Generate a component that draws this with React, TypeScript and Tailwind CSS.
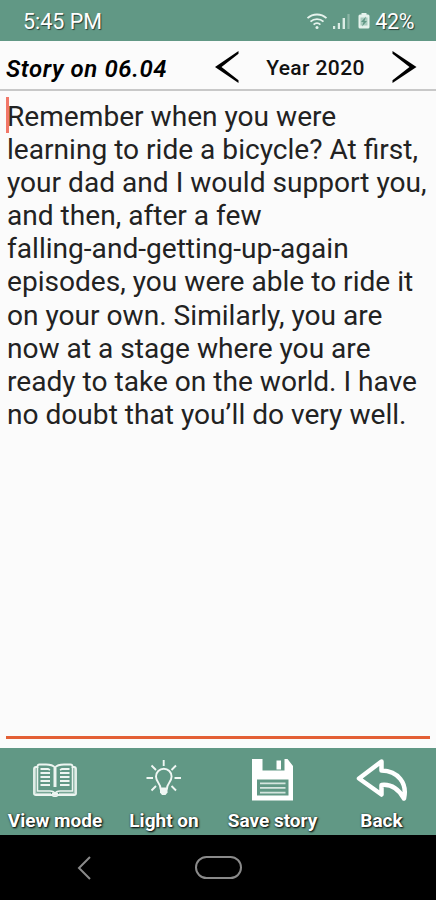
import type { ReactNode } from 'react'

const STORY_LINES = [
  'Remember when you were',
  'learning to ride a bicycle? At first,',
  'your dad and I would support you,',
  'and then, after a few',
  'falling-and-getting-up-again',
  'episodes, you were able to ride it',
  'on your own. Similarly, you are',
  'now at a stage where you are',
  'ready to take on the world. I have',
  'no doubt that you’ll do very well.',
]

/** Status bar: time on the left, wifi, signal and battery on the right. */
function StatusBar() {
  return (
    <div className="flex h-[41px] items-center justify-between bg-[#619885] pt-[3px] pr-[22px] pl-[23px] text-[21.5px] leading-none text-white [text-shadow:1px_1px_1px_rgba(0,0,0,0.6)]">
      <span className="whitespace-nowrap">5:45 PM</span>
      <div className="flex items-center">
        <svg className="mr-[5px] mb-[3px]" width="22" height="18" viewBox="0 0 22 18" fill="none" stroke="#e6f3ed" strokeWidth="1.8">
          <path d="M1.5 6.2a14 14 0 0 1 19 0M4.5 9.6a9.5 9.5 0 0 1 13 0M7.6 12.6a5 5 0 0 1 6.8 0" />
          <circle cx="11" cy="15.5" r="1.5" fill="#e6f3ed" stroke="none" />
        </svg>
        <svg className="mr-[8px] mb-[2px]" width="17" height="18" viewBox="0 0 17 18" fill="#dcece5">
          <path d="M0 14h2.2v3H0zM4.8 11h2.2v6H4.8zM9.6 6h2.4v11H9.6z" />
          <path d="M14.4 2h2.2v15h-2.2z" opacity=".35" />
        </svg>
        <svg className="mr-[5px] mb-[2px]" width="12" height="18" viewBox="0 0 12 18">
          <path d="M3.5 1h5v1.500H10a1.5 1.5 0 0 1 1.5 1.5v11A1.5 1.5 0 0 1 10 16.500H2A1.5 1.5 0 0 1 .5 15V4A1.5 1.5 0 0 1 2 2.500h1.500z" fill="#e6f3ed" />
          <path d="M2.5 5.500h7v8h-7z" fill="#a9ccbf" />
          <path d="M8 4.500 3 10h2.500L4 14.500 9 9H6.500z" fill="#619885" />
        </svg>
        <span className="tracking-[-0.4px]">42%</span>
      </div>
    </div>
  )
}

function Header() {
  return (
    <header className="flex h-[50px] items-center border-b-2 border-[#c8c8c8] pl-[6px] text-black">
      <h1 className="w-[208px] pt-[7px] text-[24px] leading-none font-semibold tracking-[0.6px] whitespace-nowrap italic">
        Story on 06.04
      </h1>
      <button type="button" aria-label="Previous year" className="mt-[4px]">
        <svg width="26" height="34" viewBox="0 0 26 34">
          <path d="M24.5 1v2.800L7.5 17l17 13.200V33L1 17z" fill="#000" />
        </svg>
      </button>
      <span className="w-[151px] pt-[7px] text-center text-[21px] leading-none font-medium tracking-[0.4px] whitespace-nowrap text-[#111]">
        Year 2020
      </span>
      <button type="button" aria-label="Next year" className="mt-[4px]">
        <svg width="26" height="34" viewBox="0 0 26 34">
          <path d="M1.5 1v2.800L18.5 17l-17 13.200V33L25.5 17z" fill="#000" />
        </svg>
      </button>
    </header>
  )
}

function BookIcon() {
  return (
    <svg width="44" height="34" viewBox="0 0 44 34" fill="none" stroke="#edf5f1">
      <path d="M22 4.500C20 2 17 1.500 13 1.500H6.500Q4.500 1.500 4.500 3.500V4H3Q1 4 1 6v24.500Q1 32 3 32h16q.5 1.200 3 1.200t3-1.200h16q2 0 2-1.500V6q0-2-2-2h-1.500v-.5q0-2-2-2H31C27 1.500 24 2 22 4.500Z" strokeWidth="1.8" />
      <path d="M4.500 4v24H17q4 0 5 2.500 1-2.500 5-2.500h12.500V4" strokeWidth="1.5" />
      <path d="M22 4.500V24" strokeWidth="3" />
      <path d="M2.500 5v25.500H18M26 30.500h15.500V5" strokeWidth="1.5" opacity=".65" />
      <path d="M19 31h6" strokeWidth="3" />
      <path d="M7.500 6H15l2 1M7.500 10H17M7.500 14H17M7.500 18H17M7.500 22H17M36.500 6H29l-2 1M36.500 10H27M36.500 14H27M36.500 18H27M36.500 22H27" strokeWidth="1.8" />
    </svg>
  )
}

function BulbIcon() {
  return (
    <svg className="-mt-1" width="36" height="36" viewBox="0 0 36 36" fill="none" stroke="#f0f7f4" strokeWidth="1.9">
      <path d="M14.5 28.500c0-5-4.500-6.500-4.500-12a7.800 7.800 0 0 1 15.600 0c0 5.500-4.600 7-4.600 12z" />
      <path d="M14 28h7.500v4.500l-2 2.500h-3.500l-2-2.500z" fill="#f0f7f4" stroke="none" />
      <path d="M17.7 0v6M.5 18h6.500M28.500 18H35M5.500 5.500l4.500 4.500M30 5.500 25.500 10M5.500 30.500l4.500-4.500M30 30.500l-4.500-4.500" />
    </svg>
  )
}

function FloppyIcon() {
  return (
    <svg width="42" height="42" viewBox="0 0 42 42" fill="#fff">
      <path fillRule="evenodd" d="M0 0h10.500v11.500h22V0h3l5.500 7v34.500H0zM5 20.500V36.500h31.500V20.500z" />
      <path d="M24.500 1.500h4.500v9h-4.500z" />
      <path d="M8 23.500h25.500v1.800H8zM8 28h25.500v1.800H8zM8 32.800h25.500v1.800H8z" fill="#d5e5df" />
    </svg>
  )
}

function BackIcon() {
  return (
    <svg width="52" height="42" viewBox="0 0 52 42" fill="none" stroke="#fff" strokeWidth="4.5" strokeLinejoin="round">
      <path d="M25.500 2.500 3 19.500l22.500 16V26c9-1 17 4 22.500 13.500C51.500 24 42 12 25.500 11.500z" />
    </svg>
  )
}

function Action({ label, icon, className }: { label: string; icon: ReactNode; className: string }) {
  return (
    <button type="button" className={`flex flex-col items-center ${className}`}>
      <span className="flex h-[63px] items-center justify-center">{icon}</span>
      <span className="text-[19px] leading-[20px] font-bold whitespace-nowrap text-white [text-shadow:1px_1px_2px_#000,0_0_2px_rgba(0,0,0,0.5)]">
        {label}
      </span>
    </button>
  )
}

export default function App() {
  return (
    <div className="flex h-[900px] w-[436px] flex-col overflow-hidden bg-[#fbfbfb] font-[Roboto,sans-serif]">
      <StatusBar />
      <Header />

      <main className="flex flex-1 flex-col px-[6px] pt-[9px] pb-[9px]">
        <div className="relative flex-1 border-b-[3px] border-[#e35f35]">
          {/* Text cursor in front of the first letter */}
          <span className="absolute -top-[3px] left-0 h-[36px] w-[3px] bg-[#f27768]" />
          <p className="pl-px text-[28.1px] leading-[33.1px] font-normal whitespace-nowrap text-[#222]">
            {STORY_LINES.map((line) => (
              <span key={line} className="block">
                {line}
              </span>
            ))}
          </p>
        </div>
      </main>

      <nav className="flex h-[87px] bg-[#619885]">
        <Action label="View mode" icon={<BookIcon />} className="w-[110px]" />
        <Action label="Light on" icon={<BulbIcon />} className="w-[108px]" />
        <Action label="Save story" icon={<FloppyIcon />} className="w-[109px]" />
        <Action label="Back" icon={<BackIcon />} className="w-[109px]" />
      </nav>

      {/* System navigation */}
      <div className="flex h-[65px] items-center bg-black pl-[77px]">
        <svg width="14" height="24" viewBox="0 0 14 24" fill="none" stroke="#8a8a8a" strokeWidth="2">
          <path d="M13 1 2 12l11 11" />
        </svg>
        <div className="ml-[104px] h-[23px] w-[47px] rounded-full border-2 border-[#8a8a8a]" />
      </div>
    </div>
  )
}
